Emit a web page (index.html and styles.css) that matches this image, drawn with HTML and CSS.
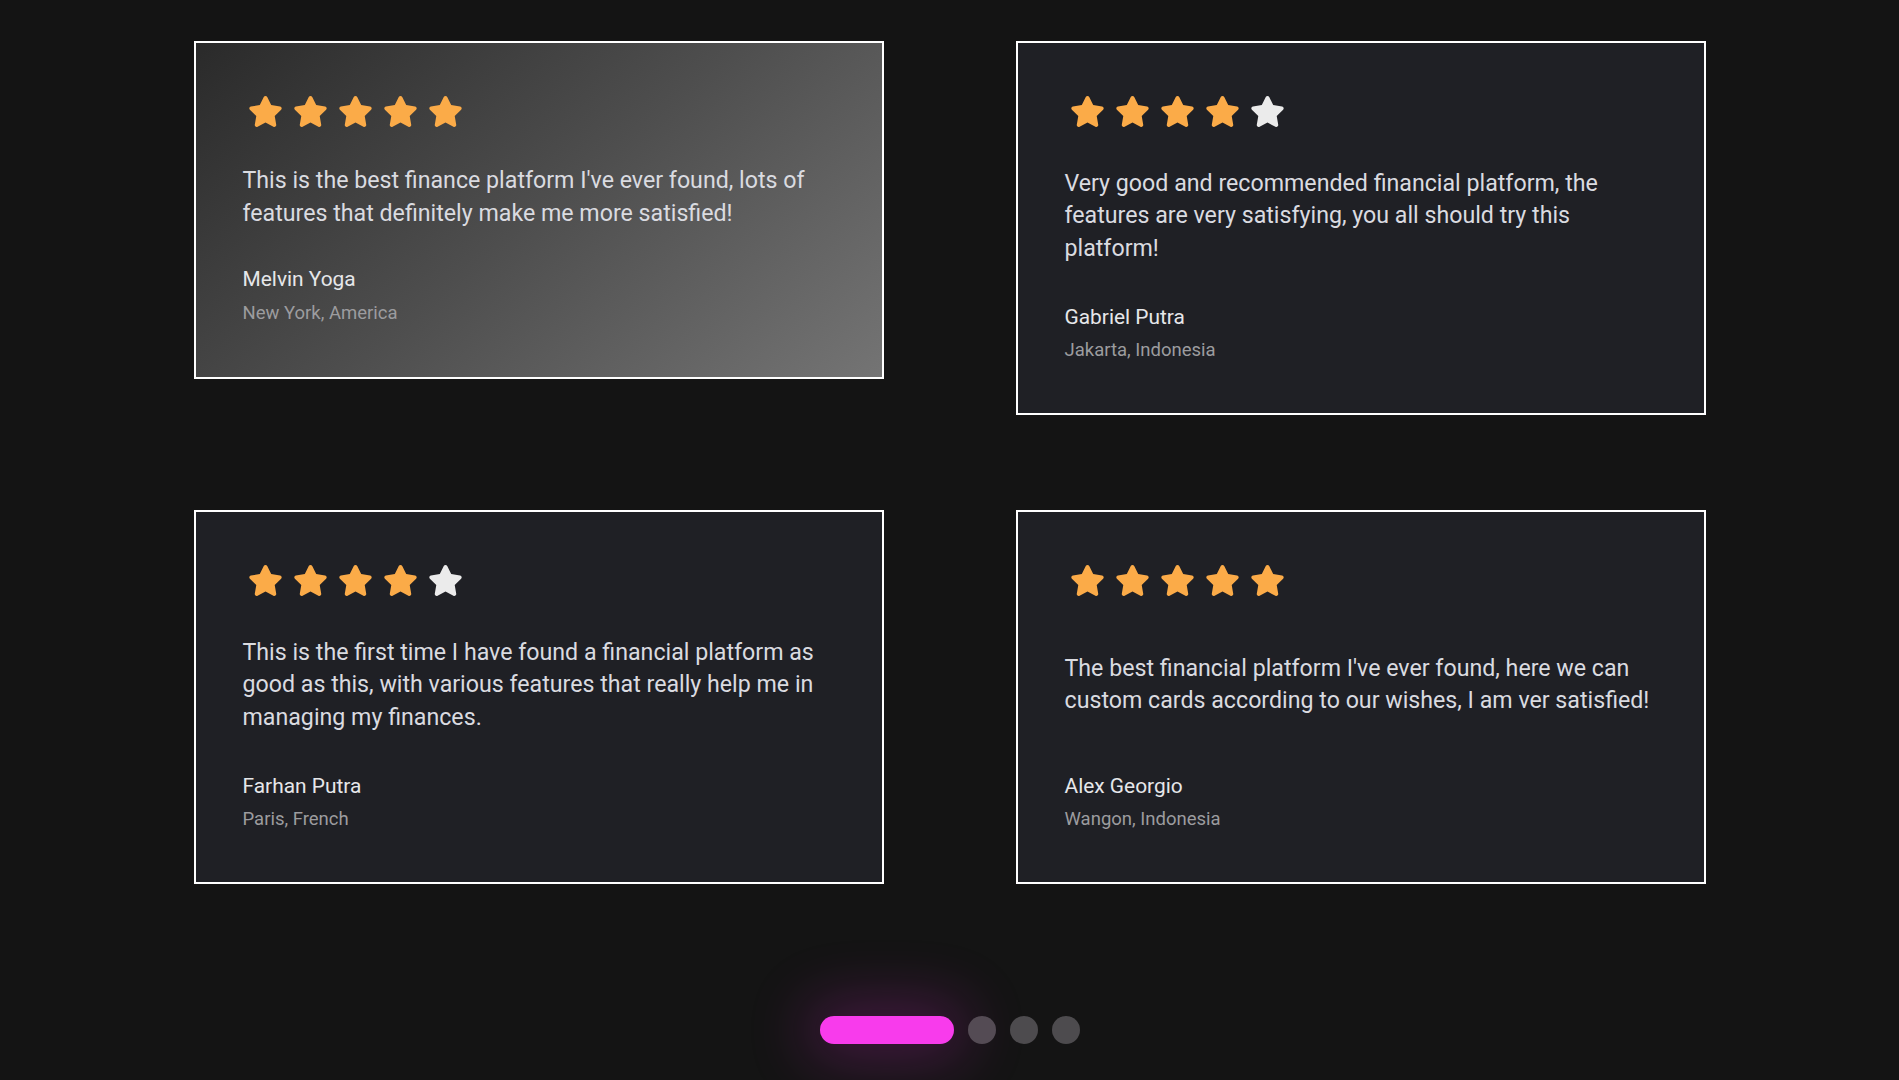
FILE: index.html
```html
<!DOCTYPE html>
<html lang="en">
<head>
<meta charset="utf-8">
<title>Testimonials</title>
<link rel="stylesheet" href="styles.css">
</head>
<body>
<svg width="0" height="0" class="defs" aria-hidden="true">
  <defs>
    <path id="star" d="M259.3 17.8L194 150.2 47.9 171.5c-26.2 3.8-36.7 36.1-17.7 54.6l105.7 103-25 145.5c-4.5 26.3 23.2 46 46.4 33.7L288 439.6l130.7 68.7c23.2 12.2 50.9-7.4 46.4-33.7l-25-145.5 105.7-103c19-18.5 8.5-50.8-17.7-54.6L382 150.2 316.7 17.8c-11.7-23.6-45.6-23.9-57.4 0z"/>
  </defs>
</svg>
<main class="section">
  <div class="grid">
    <article class="card card--active">
      <div class="stars">
        <svg class="star on" viewBox="0 0 576 512"><use href="#star"/></svg>
        <svg class="star on" viewBox="0 0 576 512"><use href="#star"/></svg>
        <svg class="star on" viewBox="0 0 576 512"><use href="#star"/></svg>
        <svg class="star on" viewBox="0 0 576 512"><use href="#star"/></svg>
        <svg class="star on" viewBox="0 0 576 512"><use href="#star"/></svg>
      </div>
      <p class="quote">This is the best finance platform I've ever found, lots of features that definitely make me more satisfied!</p>
      <div class="author">
        <div class="name">Melvin Yoga</div>
        <div class="place">New York, America</div>
      </div>
    </article>

    <article class="card">
      <div class="stars">
        <svg class="star on" viewBox="0 0 576 512"><use href="#star"/></svg>
        <svg class="star on" viewBox="0 0 576 512"><use href="#star"/></svg>
        <svg class="star on" viewBox="0 0 576 512"><use href="#star"/></svg>
        <svg class="star on" viewBox="0 0 576 512"><use href="#star"/></svg>
        <svg class="star off" viewBox="0 0 576 512"><use href="#star"/></svg>
      </div>
      <p class="quote">Very good and recommended financial platform, the features are very satisfying, you all should try this platform!</p>
      <div class="author">
        <div class="name">Gabriel Putra</div>
        <div class="place">Jakarta, Indonesia</div>
      </div>
    </article>

    <article class="card">
      <div class="stars">
        <svg class="star on" viewBox="0 0 576 512"><use href="#star"/></svg>
        <svg class="star on" viewBox="0 0 576 512"><use href="#star"/></svg>
        <svg class="star on" viewBox="0 0 576 512"><use href="#star"/></svg>
        <svg class="star on" viewBox="0 0 576 512"><use href="#star"/></svg>
        <svg class="star off" viewBox="0 0 576 512"><use href="#star"/></svg>
      </div>
      <p class="quote">This is the first time I have found a financial platform as good as this, with various features that really help me in managing my finances.</p>
      <div class="author">
        <div class="name">Farhan Putra</div>
        <div class="place">Paris, French</div>
      </div>
    </article>

    <article class="card">
      <div class="stars">
        <svg class="star on" viewBox="0 0 576 512"><use href="#star"/></svg>
        <svg class="star on" viewBox="0 0 576 512"><use href="#star"/></svg>
        <svg class="star on" viewBox="0 0 576 512"><use href="#star"/></svg>
        <svg class="star on" viewBox="0 0 576 512"><use href="#star"/></svg>
        <svg class="star on" viewBox="0 0 576 512"><use href="#star"/></svg>
      </div>
      <p class="quote">The best financial platform I've ever found, here we can custom cards according to our wishes, I am ver satisfied!</p>
      <div class="author">
        <div class="name">Alex Georgio</div>
        <div class="place">Wangon, Indonesia</div>
      </div>
    </article>
  </div>

  <div class="dots">
    <span class="dot dot--active"></span>
    <span class="dot dot--first"></span>
    <span class="dot"></span>
    <span class="dot"></span>
  </div>
</main>
</body>
</html>
```

FILE: styles.css
```css
* {
  box-sizing: border-box;
}

html,
body {
  margin: 0;
  padding: 0;
  background: #141414;
  height: 1080px;
  overflow: hidden;
}

body {
  font-family: Roboto, "Noto Sans", "Liberation Sans", sans-serif;
  color: #dcdde1;
}

.defs {
  position: absolute;
  width: 0;
  height: 0;
}

.section {
  padding-top: 41px;
}

.grid {
  display: grid;
  grid-template-columns: 690px 690px;
  grid-auto-rows: minmax(374px, auto);
  column-gap: 132px;
  row-gap: 95px;
  justify-content: center;
}

.card {
  display: flex;
  flex-direction: column;
  justify-content: space-between;
  gap: 37px;
  padding: 53px 40px 52px 47px;
  border: 2px solid #ffffff;
  background: #1f2025;
}

.card--active {
  align-self: start;
  padding-bottom: 53px;
  background: linear-gradient(140deg, #2a2a2a 0%, #4e4e4e 50%, #747474 100%);
}

.card--active .author {
  margin-top: 1px;
}

.stars {
  display: flex;
  gap: 10px;
  margin-left: 5px;
  height: 31px;
}

.star {
  width: 35px;
  height: 31px;
  display: block;
}

.star.on {
  fill: #fbab48;
}

.star.off {
  fill: #ebebeb;
}

.quote {
  margin: 0;
  font-size: 23.2px;
  line-height: 32.5px;
  color: #dadbe0;
}

.author {
  margin-top: 1px;
}

.name {
  font-size: 20.9px;
  color: #e6e7ea;
}

.place {
  margin-top: 10.5px;
  font-size: 18.5px;
  color: #9c9c9f;
}

.dots {
  display: flex;
  justify-content: center;
  align-items: center;
  gap: 14px;
  margin-top: 132px;
}

.dot {
  width: 28px;
  height: 28px;
  border-radius: 50%;
  background: #4d4b4e;
}

.dot--first {
  background: #544b54;
}

.dot--active {
  width: 134px;
  border-radius: 14px;
  background: #f83bec;
  box-shadow: 0 0 60px 14px rgba(200, 40, 190, 0.28);
}
```
